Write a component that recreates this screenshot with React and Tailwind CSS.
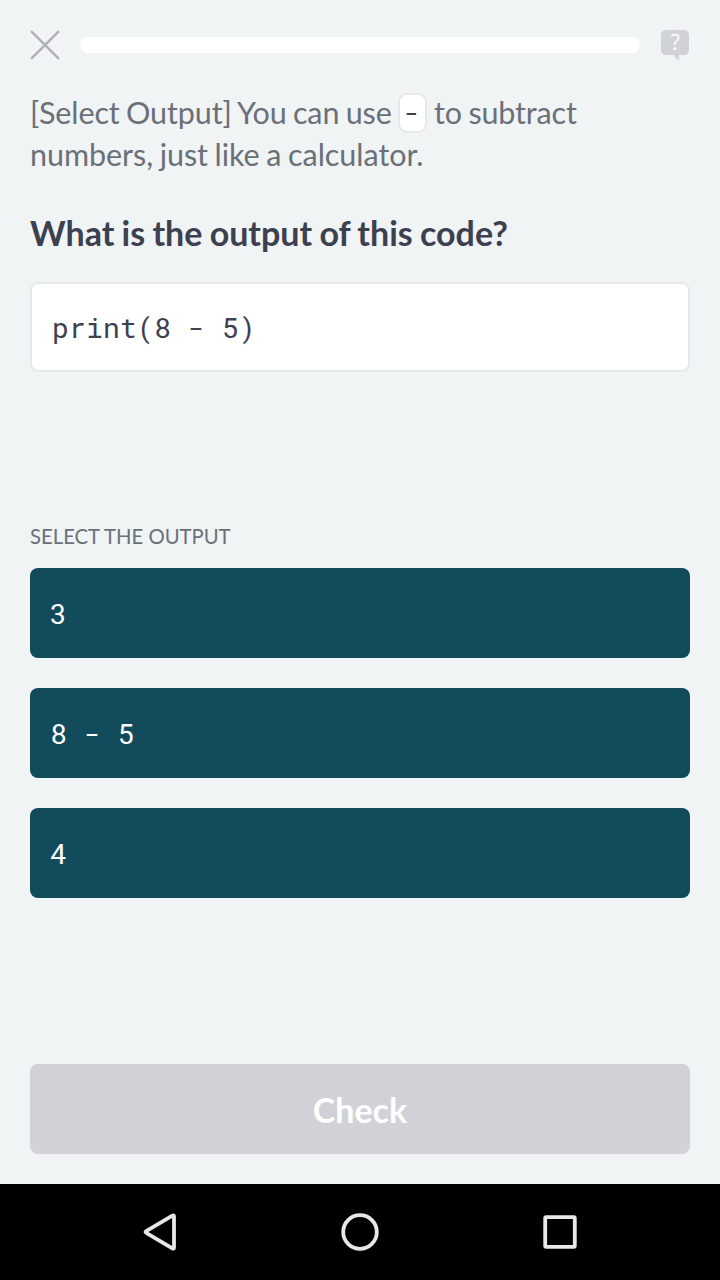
const options = ["3", "8 - 5", "4"];

function CloseIcon() {
  return (
    <svg className="block h-[30px] w-[30px]" viewBox="0 0 30 30" fill="none" stroke="#b0b0b6" strokeWidth="2.4" strokeLinecap="round">
      <path d="M1.8 1.8 28.2 28.2M28.2 1.8 1.8 28.2" />
    </svg>
  );
}

function HelpIcon() {
  return (
    <svg className="block h-[30px] w-[28px]" viewBox="0 0 28 30" fill="none">
      <path d="M5.5 0H22.5Q28 0 28 5.5V19.5Q28 25 22.5 25H18V30Q14.5 29 12.7 25H5.5Q0 25 0 19.5V5.5Q0 0 5.5 0Z" fill="#d1d2d8" />
      <path d="M10.3 5.8Q11.8 4.6 14 4.6C16.4 4.6 17.6 5.8 17.6 7.7C17.6 10.9 13.7 10.8 13.7 13.6V15" stroke="#f0f4f5" strokeWidth="2.3" />
      <circle cx="13.7" cy="18.7" r="1.8" fill="#f0f4f5" />
    </svg>
  );
}

export default function App() {
  return (
    <div className="flex h-[1280px] w-[720px] flex-col bg-[#f0f4f5] font-['Lato',sans-serif]">
      <main className="flex flex-1 flex-col px-[30px] pt-[30px] pb-[30px]">
        <header className="flex h-[30px] items-center">
          <button aria-label="Close"><CloseIcon /></button>
          <div className="ml-5 h-4 w-[560px] rounded-full bg-white" />
          <button aria-label="Help" className="ml-[21px]"><HelpIcon /></button>
        </header>

        <div className="mt-[31px] text-[30.5px] leading-[42px] tracking-[-0.05px] [word-spacing:-1.1px] whitespace-nowrap text-[#6b7078]">
          <p className="flex h-[42px] items-center">
            <span className="w-[362px] tracking-[-0.1px] [word-spacing:-1.4px]">[Select Output] You can use</span>
            <code className="mt-px mr-[7px] ml-[6px] flex h-[40px] w-[29px] items-center justify-center rounded-[9px] border-2 border-[#e6e9eb] bg-white pr-[2px] font-['Roboto_Mono','DejaVu_Sans_Mono',monospace] text-[25px] text-[#3c404d]">-</code>
            <span className="tracking-[-0.15px]">to subtract</span>
          </p>
          <p>numbers, just like a calculator.</p>
        </div>

        <h1 className="mt-[34px] h-[48px] text-[34px] leading-[48px] font-bold [word-spacing:-1px] whitespace-nowrap text-[#3c404f]">What is the output of this code?</h1>

        <pre className="mt-[25px] flex h-[90px] items-center rounded-lg border-2 border-[#e6e9eb] bg-white pt-[2px] pl-5 font-['Roboto_Mono','DejaVu_Sans_Mono',monospace] text-[28px] tracking-[0.18px] text-[#3c404f]">print(8 - 5)</pre>

        <h2 className="mt-[149px] h-[30px] text-[20.3px] leading-[30px] text-[#6b7078]">SELECT THE OUTPUT</h2>
        <div className="mt-[17px] flex flex-col gap-[30px]">
          {options.map((o) => (
            <button key={o} className="flex h-[90px] items-center rounded-lg bg-[#124b5c] pt-[2px] pl-5 font-['Roboto_Mono','DejaVu_Sans_Mono',monospace] text-[28px] tracking-[0.1px] whitespace-pre text-white">{o}</button>
          ))}
        </div>

        <button className="mt-auto h-[90px] rounded-lg bg-[#d1d2d8] text-[34px] font-bold text-white">Check</button>
      </main>

      <nav className="flex h-24 bg-black px-[60px]">
        {[
          <path key="back" d="M14.2 48.8Q12.8 48 14.2 47.2L40.4 31.6Q42 30.7 42 32.5V63.5Q42 65.3 40.4 64.4Z" />,
          <circle key="home" cx="28" cy="48" r="16.8" />,
          <rect key="recent" x="13.2" y="33.2" width="29.6" height="29.6" rx="1" />,
        ].map((shape) => (
          <div key={shape.key} className="flex flex-1 justify-center">
            <svg className="h-24 w-14" viewBox="0 0 56 96" fill="none" stroke="#e8e8e8" strokeWidth="3.8" strokeLinejoin="round">{shape}</svg>
          </div>
        ))}
      </nav>
    </div>
  );
}
